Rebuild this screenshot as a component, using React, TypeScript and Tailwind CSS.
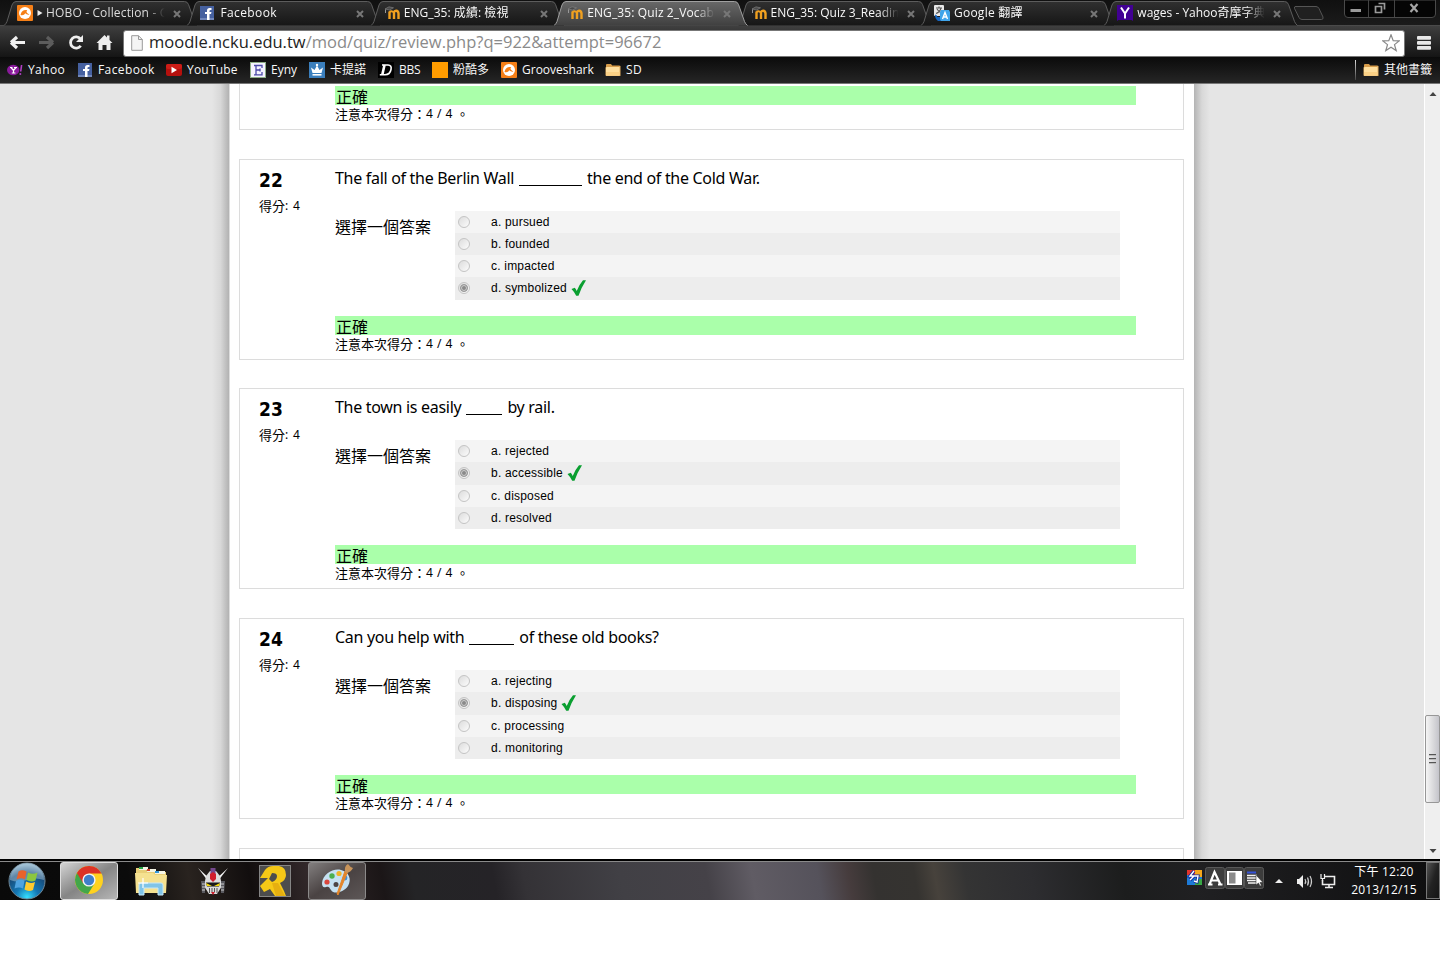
import type { ReactNode } from "react";

const UI = "font-['Open_Sans','Noto_Sans_CJK_TC',sans-serif]";
const PAGE = "font-['Noto_Sans','Noto_Sans_CJK_TC',sans-serif]";
const CJK = "font-['Noto_Sans_CJK_TC',sans-serif]";

/* ---------- icons ---------- */

function Grooveshark() {
  return (
    <svg width="16" height="16" viewBox="0 0 16 16">
      <rect width="16" height="16" rx="1" fill="#f57f17" />
      <circle cx="8" cy="8" r="6" fill="#fff" />
      <path d="M3.500 10C4.200 6 7 4.500 10.200 5.200C8.800 6.500 9.500 8.200 12.500 9.600C10.500 9.800 9.200 9.300 8.200 8.200C7.500 9.700 6 10.600 3.500 10Z" fill="#f57f17" />
    </svg>
  );
}

function FacebookIcon() {
  return (
    <svg width="14" height="14" viewBox="0 0 14 14">
      <rect width="14" height="14" fill="#4661a0" />
      <rect y="12" width="14" height="2" fill="#7187bb" />
      <path d="M7 14V8H5V6H7V4.500Q7 2 9.500 2H11.500V4H10.500Q9.500 4 9.500 5V6H11.500L11 8H9.500V14Z" fill="#fff" />
    </svg>
  );
}

function MoodleIcon() {
  return (
    <svg width="16" height="16" viewBox="0 0 16 16">
      <path d="M5.500 14V6.500M10 14V7M9.800 7.500Q10.500 5.600 12.300 5.800T14.500 8.200V14" fill="none" stroke="#f0a020" strokeWidth="2.400" />
      <path d="M5.500 7Q7.500 5.200 10 7.500" fill="none" stroke="#f0a020" strokeWidth="1.800" />
      <path d="M1 4L5 1.800L9.500 2.800L5.500 5Z" fill="#4a4a4a" stroke="#888" strokeWidth=".6" />
      <path d="M1.500 4.500V8" stroke="#999" strokeWidth="1" fill="none" />
    </svg>
  );
}

function TranslateIcon() {
  return (
    <svg width="16" height="16" viewBox="0 0 16 16">
      <rect x="0" y="0" width="10" height="11" rx="1" fill="#e9e9e9" />
      <path d="M2 3H8M5 1.500V3M7 3Q6 7 2 8.500M3 4Q5 7.500 8 8" stroke="#555" strokeWidth="1.100" fill="none" />
      <path d="M1 9.500Q3 9.500 3.500 12H7V16H4Q1 14 1 9.500Z" fill="#1565c0" />
      <path d="M7 5H15L16 7V16H7L6 14V7Z" fill="#3fa4ea" />
      <path d="M8.500 14L11 7.500L13.500 14M9.500 12H12.500" stroke="#fff" strokeWidth="1.400" fill="none" />
    </svg>
  );
}

function YahooDict() {
  return (
    <svg width="16" height="16" viewBox="0 0 16 16">
      <path d="M0 0H16V16L14.500 15H1.500L0 16Z" fill="#410093" />
      <path d="M4 2.500L8 8.500L12 2.500M8 8V13.500" stroke="#fff" strokeWidth="2" fill="none" />
    </svg>
  );
}

function YahooIcon() {
  return (
    <svg width="16" height="14" viewBox="0 0 16 14">
      <ellipse cx="6.200" cy="7" rx="6.200" ry="5.200" fill="#8a1a9c" />
      <path d="M3 4.500H5.500M7 4.500H10M4 4.500L6.500 7.500L9 4.500M6.500 7.500V9.800M4.800 10H8.400" stroke="#fff" strokeWidth="1.200" fill="none" />
      <path d="M14.600 2L13.700 8.500" stroke="#b03fc4" strokeWidth="1.600" />
      <circle cx="13.300" cy="11" r="1" fill="#b03fc4" />
    </svg>
  );
}

function YouTubeIcon() {
  return (
    <svg width="16" height="12" viewBox="0 0 16 12">
      <rect width="16" height="12" rx="2" fill="#b5100d" />
      <rect width="16" height="5" rx="2" fill="#cc1d17" />
      <path d="M5.500 2.800L11 6L5.500 9.200Z" fill="#fff" />
    </svg>
  );
}

function EynyIcon() {
  return (
    <svg width="16" height="16" viewBox="0 0 16 16">
      <rect width="16" height="16" fill="#8fae86" />
      <rect x="1" y="1" width="14" height="14" fill="#f5f3ff" />
      <path d="M4 3.500H12V6M4 12.800H12V10M6 3.500V13M6 8H10M10 6.500V9.500" stroke="#4a49a8" strokeWidth="1.300" fill="none" />
    </svg>
  );
}

function CrownIcon() {
  return (
    <svg width="16" height="16" viewBox="0 0 16 16">
      <rect width="16" height="16" fill="#3b7fbd" />
      <path d="M3.500 11L2 5.500L5.500 8L8 3.500L10.500 8L14 5.500L12.500 11Z" fill="#fff" />
      <rect x="3.500" y="12" width="9" height="1.600" fill="#fff" />
      <circle cx="8" cy="3" r="1.200" fill="#fff" />
    </svg>
  );
}

function DIcon() {
  return (
    <svg width="16" height="16" viewBox="0 0 16 16">
      <rect width="16" height="16" fill="#000" />
      <path d="M4 3H10Q14 3.200 13 7.500Q12 12.800 7 12.800H1.800" fill="none" stroke="#fff" strokeWidth="1.600" />
      <path d="M6.500 3L4.300 12.800" stroke="#fff" strokeWidth="2.600" />
    </svg>
  );
}

function Folder() {
  return (
    <svg width="16" height="14" viewBox="0 0 16 14">
      <path d="M1 2Q1 1 2 1H6L7.200 2.500H14V4H1Z" fill="#d79c4a" />
      <path d="M.5 4.300H13.800L14 2.500L15.500 3V12.500Q15.500 13 15 13H1.500Q.5 13 .5 12Z" fill="#e2ac5e" />
      <rect x="1" y="4" width="13.500" height="8.500" rx=".6" fill="#ffdf9e" />
      <path d="M1 9H14.500V12.500H1Z" fill="#fbd186" />
    </svg>
  );
}

function Check() {
  return (
    <svg width="16" height="16" viewBox="0 0 16 16" className="shrink-0">
      <path d="M.5 9L3.800 7.800Q5 9.300 5.700 11Q8.300 4.500 12 .3H15Q10.500 7.200 7.500 15.800H5.200Q3.300 11.800.5 9Z" fill="#0a9f30" />
    </svg>
  );
}

/* ---------- browser chrome ---------- */

interface TabData {
  icon: ReactNode;
  title: string;
  text: string;
  active?: boolean;
  playing?: boolean;
}

const tabs: TabData[] = [
  { icon: <Grooveshark />, title: "HOBO - Collection - G", text: "tracking-[0.15px]", playing: true },
  { icon: <FacebookIcon />, title: "Facebook", text: "tracking-[0.4px]" },
  { icon: <MoodleIcon />, title: "ENG_35: 成績: 檢視", text: "tracking-[0.05px]" },
  { icon: <MoodleIcon />, title: "ENG_35: Quiz 2_Vocab", text: "tracking-[0.12px]", active: true },
  { icon: <MoodleIcon />, title: "ENG_35: Quiz 3_Readin", text: "" },
  { icon: <TranslateIcon />, title: "Google 翻譯", text: "tracking-[0.25px]" },
  { icon: <YahooDict />, title: "wages - Yahoo奇摩字典", text: "" },
];

function Tab({ tab }: { tab: TabData }) {
  return (
    <div className={tab.active ? "relative z-10 h-[26px] w-[183.4px]" : "relative h-[26px] w-[183.4px]"}>
      <svg className="absolute left-0 top-0" width="194" height="26" viewBox="0 0 194 26">
        <defs>
          <linearGradient id="tabIdle" x1="0" y1="0" x2="0" y2="1">
            <stop offset="0" stopColor="#303030" />
            <stop offset="1" stopColor="#161616" />
          </linearGradient>
          <linearGradient id="tabActive" x1="0" y1="0" x2="0" y2="1">
            <stop offset="0" stopColor="#686868" />
            <stop offset="1" stopColor="#404040" />
          </linearGradient>
        </defs>
        <path
          d="M0 25.500Q2 24 3 21.500L8 5Q9.200 1.500 12 1.500H180.500Q183.500 1.500 184.500 4.500L190.500 21.500Q191.500 24 193.500 25.500"
          fill={tab.active ? "url(#tabActive)" : "url(#tabIdle)"}
          stroke={tab.active ? "#a0a0a0" : "#5c5c5c"}
        />
      </svg>
      <div className="relative flex h-full items-center pl-[13px]">
        <span className="flex w-4 shrink-0">{tab.icon}</span>
        {tab.playing && (
          <svg className="ml-1 shrink-0" width="6" height="8" viewBox="0 0 6 8">
            <path d="M.5 1L5.500 4L.5 7Z" fill="#eee" />
          </svg>
        )}
        <span
          className={`${tab.playing ? "ml-[3px] w-[120px] text-[#dcdcdc]" : "ml-1 w-[129px] text-[#f8f8f8]"} ${tab.text} overflow-hidden whitespace-nowrap text-xs leading-4 [mask-image:linear-gradient(to_right,black_84%,transparent_99%)]`}
        >
          {tab.title}
        </span>
        <svg className="ml-[7px] mt-px shrink-0" width="8" height="8" viewBox="0 0 8 8">
          <path d="M1 1L7 7M7 1L1 7" stroke="#777" strokeWidth="2" />
        </svg>
      </div>
    </div>
  );
}

function WindowButtons() {
  return (
    <svg width="93" height="18" viewBox="0 0 93 18" className="mr-[3px] shrink-0">
      <path d="M.5 0V14Q.5 17.500 4 17.500H88Q91.500 17.500 91.500 14V0Z" fill="#050505" stroke="#4a4a4a" />
      <path d="M24.500 0V17M50.500 0V17" stroke="#444" />
      <rect x="6.500" y="9" width="10.500" height="3" fill="#9a9a9a" />
      <path d="M34.500 3.500H40.500V9.500M31.500 6.500H37.500V12.500H31.500Z" stroke="#9a9a9a" strokeWidth="1.700" fill="none" />
      <path d="M66.500 4L73.500 12M73.500 4L66.500 12" stroke="#a5a5a5" strokeWidth="2.200" />
    </svg>
  );
}

function TabStrip() {
  return (
    <div className="flex h-[25px] bg-gradient-to-b from-[#101010] to-[#1b1b1b] pl-1">
      <div className="flex">
        {tabs.map((tab) => (
          <Tab key={tab.title} tab={tab} />
        ))}
      </div>
      <svg width="36" height="22" viewBox="0 0 36 22" className="ml-1 shrink-0">
        <path d="M3 6.500H24Q26 6.500 27 8.500L31 17Q31.500 19.500 29.500 19.500H10Q8 19.500 7 17.500L2.500 8.500Q2 6.500 3.500 6.500Z" fill="#202020" stroke="#555" />
      </svg>
      <div className="flex-1" />
      <WindowButtons />
    </div>
  );
}

function Toolbar() {
  return (
    <div className="flex h-8 items-center border-t border-[#4a4a4a] bg-gradient-to-b from-[#3f3f3f] to-[#151515]">
      <svg width="114" height="24" viewBox="0 0 114 24" className="ml-1 mt-[3px] shrink-0">
        <path d="M7 11.500L13 6M7 11.500L13 17M8 11.500H21" stroke="#f0f0f0" strokeWidth="3.200" fill="none" />
        <path d="M49 11.500L43 6M49 11.500L43 17M48 11.500H35" stroke="#5c5c5c" strokeWidth="3.200" fill="none" />
        <path d="M76.500 8A5.600 5.600 0 1 0 76.700 14.800" stroke="#eee" strokeWidth="2.800" fill="none" />
        <path d="M79 4V11H72Z" fill="#eee" />
        <path d="M92.500 12L100.500 4L103 6.500V4.500H105.500V9L108.500 12H106.500V19H102.500V14H98.500V19H94.500V12Z" fill="#eee" />
      </svg>
      <div className="ml-[5px] mt-[3px] flex h-[27px] w-[1282px] shrink-0 items-center rounded-[3px] border border-[#777] bg-white pl-[7px] pr-1">
        <svg width="12" height="16" viewBox="0 0 12 16" className="shrink-0">
          <path d="M.7.7H7.500L11.300 4.500V15.300H.7Z" fill="#f4f4f4" stroke="#999" />
          <path d="M7.500.7V4.500H11.300" fill="none" stroke="#999" />
        </svg>
        <span className="ml-1.5 flex-1 whitespace-nowrap pb-0.5 text-[16.5px] leading-6 text-[#8a8a8a]">
          <span className="text-[#222]">moodle.ncku.edu.tw</span>/mod/quiz/review.php?q=922&amp;attempt=96672
        </span>
        <svg width="18" height="18" viewBox="0 0 18 18">
          <path d="M9 .8L11.200 6.600L17.200 6.900L12.500 10.600L14.200 16.600L9 13.200L3.800 16.600L5.500 10.600L.8 6.900L6.800 6.600Z" fill="#fff" stroke="#888" strokeWidth="1.200" />
        </svg>
      </div>
      <svg width="14" height="16" viewBox="0 0 14 16" className="ml-3 mt-0.5 shrink-0">
        <rect y="1" width="14" height="3.800" rx="1" fill="#e8e8e8" />
        <rect y="6" width="14" height="3.800" rx="1" fill="#e8e8e8" />
        <rect y="11" width="14" height="3.800" rx="1" fill="#e8e8e8" />
      </svg>
    </div>
  );
}

function Bookmark({ icon, label, box }: { icon: ReactNode; label: string; box: string }) {
  return (
    <div className={`${box} flex shrink-0 items-center gap-[5px] whitespace-nowrap`}>
      <span className="flex w-4 justify-center">{icon}</span>
      <span>{label}</span>
    </div>
  );
}

function Bookmarks() {
  return (
    <div className="flex h-[27px] items-center border-b border-[#777] bg-gradient-to-b from-[#0b0b0b] to-[#262626] pl-[7px] text-xs text-[#f8f8f8]">
      <Bookmark box="w-[70px] tracking-[0.4px]" icon={<YahooIcon />} label="Yahoo" />
      <Bookmark box="w-[89px] tracking-[0.4px]" icon={<FacebookIcon />} label="Facebook" />
      <Bookmark box="w-[84px] tracking-[0.2px]" icon={<YouTubeIcon />} label="YouTube" />
      <Bookmark box="w-[59px]" icon={<EynyIcon />} label="Eyny" />
      <Bookmark box="w-[69px]" icon={<CrownIcon />} label="卡提諾" />
      <Bookmark box="w-[54px] tracking-[-0.2px]" icon={<DIcon />} label="BBS" />
      <Bookmark box="w-[69px]" icon={<span className="size-4 bg-[#ff9c00]" />} label="粉酷多" />
      <Bookmark box="w-[104px]" icon={<Grooveshark />} label="Grooveshark" />
      <Bookmark box="w-[60px] tracking-[0.3px]" icon={<Folder />} label="SD" />
      <div className="flex-1" />
      <div className="mr-[7px] h-5 w-px bg-gradient-to-b from-[#ddd] to-[#444]" />
      <Bookmark box="w-[77px]" icon={<Folder />} label="其他書籤" />
    </div>
  );
}

/* ---------- quiz page ---------- */

interface Question {
  no: number;
  before: string;
  blank: string;
  after: string;
  answers: string[];
  correct: number;
  tall: number;
  gap: string;
}

const questions: Question[] = [
  { no: 22, before: "The fall of the Berlin Wall", blank: "w-[63px]", after: "the end of the Cold War.", answers: ["pursued", "founded", "impacted", "symbolized"], correct: 3, tall: 3, gap: "mb-7" },
  { no: 23, before: "The town is easily", blank: "w-[36px]", after: "by rail.", answers: ["rejected", "accessible", "disposed", "resolved"], correct: 1, tall: 1, gap: "mb-[29px]" },
  { no: 24, before: "Can you help with", blank: "w-[45px]", after: "of these old books?", answers: ["rejecting", "disposing", "processing", "monitoring"], correct: 1, tall: 1, gap: "mb-[29px]" },
];

function Feedback() {
  return (
    <div className="ml-[95px] w-[801px]">
      <div className={`${CJK} h-[19px] bg-[#aaffaa] pl-px pt-px text-base leading-[18px]`}>正確</div>
      <div className={`${PAGE} flex h-[18px] items-center text-xs leading-4 text-black`}>
        <span className={`${CJK} text-[13px]`}>注意本次得分：</span>
        <span className="tracking-[0.5px]">4 / 4</span>
        <span className={`${CJK} ml-[3px] text-[13px]`}>。</span>
      </div>
    </div>
  );
}

function Radio({ on }: { on: boolean }) {
  return (
    <span className="flex size-3 items-center justify-center rounded-full border border-[#c4c4c4] bg-gradient-to-br from-[#dcdcdc] to-[#fcfcfc]">
      {on && <span className="size-2 rounded-full border border-[#999] bg-[#8a8a8a] shadow-[inset_0_0_0_1px_#cfcfcf]" />}
    </span>
  );
}

function QuestionCard({ q }: { q: Question }) {
  return (
    <section className={`${q.gap} flex h-[201px] shrink-0 flex-col border border-[#dcdcdc]`}>
      <div className="flex h-[156px] shrink-0">
        <div className="w-[95px] shrink-0 pl-[19px] pt-2">
          <div className="font-['DejaVu_Sans_Condensed','DejaVu_Sans',sans-serif] text-[19px] font-bold leading-6 [font-stretch:condensed]">{q.no}</div>
          <div className={`${PAGE} mt-[5px] flex items-center text-xs leading-[18px]`}>
            <span className={`${CJK} text-[13px]`}>得分</span>
            <span className="tracking-[0.8px]">:&nbsp;4</span>
          </div>
        </div>
        <div className="flex-1">
          <div className={`${PAGE} flex h-[51px] whitespace-nowrap pt-[7px] text-base leading-[22px] tracking-[-0.3px]`}>
            <span>{q.before}</span>
            <span className={`${q.blank} mx-[5px] h-[19px] border-b border-black`} />
            <span>{q.after}</span>
          </div>
          <div className="flex">
            <div className={`${CJK} w-[120px] pt-[3px] text-base leading-6`}>選擇一個答案</div>
            <ul className="w-[665px]">
              {q.answers.map((answer, i) => (
                <li
                  key={answer}
                  className={`${i === q.tall ? "h-[23px]" : "h-[22px]"} flex items-start pl-[3px] pt-[3px] font-['Liberation_Sans',Arial,sans-serif] text-xs leading-4 tracking-[0.2px] odd:bg-[#f4f4f4] even:bg-[#ededed]`}
                >
                  <span className="flex h-[15px] items-center">
                    <Radio on={i === q.correct} />
                  </span>
                  <span className="ml-[21px] mr-1">
                    {"abcd"[i]}. {answer}
                  </span>
                  {i === q.correct && <Check />}
                </li>
              ))}
            </ul>
          </div>
        </div>
      </div>
      <Feedback />
    </section>
  );
}

function Scrollbar() {
  return (
    <div className="flex w-4 shrink-0 flex-col items-center border-l border-white bg-[#efefef]">
      <svg width="8" height="4" viewBox="0 0 8 4" className="mt-2 shrink-0">
        <path d="M4 0L7.500 4H.5Z" fill="#444" />
      </svg>
      <div className="mt-[619px] flex h-[88px] w-[15px] shrink-0 flex-col items-center justify-center gap-[2px] rounded-[2px] border border-[#979797] bg-gradient-to-r from-[#f5f5f5] via-[#dcdcde] to-[#c4c4ca]">
        <span className="h-[2px] w-[7px] border-t border-[#555] bg-[#bbb]" />
        <span className="h-[2px] w-[7px] border-t border-[#555] bg-[#bbb]" />
        <span className="h-[2px] w-[7px] border-t border-[#555] bg-[#bbb]" />
      </div>
      <svg width="8" height="4" viewBox="0 0 8 4" className="mt-[46px] shrink-0">
        <path d="M4 4L7.500 0H.5Z" fill="#444" />
      </svg>
    </div>
  );
}

function Page() {
  return (
    <div className="flex h-[775px] overflow-hidden bg-[#e5e5e5] text-black">
      <div className="flex flex-1 justify-end">
        <div className="w-[17px] bg-gradient-to-r from-[#e5e5e5] via-[#d8d8d8] to-[#b2b2b2]" />
      </div>
      <main className="flex w-[965px] shrink-0 flex-col overflow-hidden border-l border-[#ddd] bg-white pl-[9px] pr-2.5">
        <section className="mb-[29px] flex h-[46px] w-[945px] shrink-0 flex-col border border-t-0 border-[#dcdcdc] pt-0.5">
          <Feedback />
        </section>
        {questions.map((q) => (
          <QuestionCard key={q.no} q={q} />
        ))}
        <section className="h-5 shrink-0 border border-[#dcdcdc]" />
      </main>
      <div className="w-4 bg-gradient-to-r from-[#b4b4b4] via-[#d8d8d8] to-[#e5e5e5]" />
      <div className="w-[214px]" />
      <Scrollbar />
    </div>
  );
}

/* ---------- taskbar ---------- */

function StartOrb() {
  return (
    <svg width="38" height="38" viewBox="0 0 38 38">
      <defs>
        <radialGradient id="orb" cx=".5" cy=".95" r=".9">
          <stop offset="0" stopColor="#36e0ff" />
          <stop offset=".35" stopColor="#1477b4" />
          <stop offset=".75" stopColor="#174a78" />
          <stop offset="1" stopColor="#8fb4cc" />
        </radialGradient>
      </defs>
      <circle cx="19" cy="19" r="18" fill="url(#orb)" stroke="#6f8796" />
      <path d="M2 18A17 17 0 0 1 36 18Q28 15 19 18T2 18Z" fill="#b9d0df" opacity=".45" />
      <path d="M10.500 9.500Q14 7 18.500 9.500L17 17.500Q13 15 8.500 17.500Z" fill="#e9622b" />
      <path d="M20 10.500Q24.500 13 29.500 10.500L27.500 18.500Q23 20.500 18.500 18Z" fill="#8cc63e" />
      <path d="M8 19Q12.500 16.500 16.500 19L15 26.500Q11 24.500 6.500 26.500Z" fill="#4fa3e0" />
      <path d="M18 19.500Q22.500 22 27 20L25 28Q20.500 30 16.500 27.500Z" fill="#ffcb2d" />
    </svg>
  );
}

function ChromeIcon() {
  return (
    <svg width="30" height="30" viewBox="0 0 30 30">
      <circle cx="15" cy="15" r="14" fill="#ffd21f" />
      <path d="M15 15L2.900 8A14 14 0 0 0 14 29L20.500 18.500Z" fill="#43a64a" />
      <path d="M2.900 8A14 14 0 0 1 27.500 8.500H15L9 18Z" fill="#dc3226" />
      <circle cx="15" cy="15" r="6.600" fill="#f4f4f4" />
      <circle cx="15" cy="15" r="5.200" fill="#3f7fc9" />
    </svg>
  );
}

function ExplorerIcon() {
  return (
    <svg width="34" height="30" viewBox="0 0 34 30">
      <path d="M2 5V2H12L13 5H22L23 6H32V27H2Z" fill="#e9cf78" />
      <rect x="5" y="1" width="9" height="3" fill="#f5f5e5" />
      <rect x="5" y="1" width="4" height="2" fill="#29a745" />
      <rect x="13" y="3" width="9" height="3" fill="#f5f5e5" />
      <rect x="13" y="3" width="3" height="2" fill="#d2452d" />
      <rect x="21" y="5" width="10" height="3" fill="#f5f5e5" />
      <rect x="21" y="5" width="4" height="2" fill="#3497d8" />
      <path d="M1 7H19L21 9H33L32 27H2Z" fill="#f5e190" />
      <path d="M5 29V19Q5 17 7 17H27Q29 17 29 19V29H24V22H10V29Z" fill="#80c4e8" stroke="#c7e8f8" />
      <path d="M9 12V22M4 17H14" stroke="#fff" strokeWidth="1.200" />
    </svg>
  );
}

function RobotIcon() {
  return (
    <svg width="32" height="30" viewBox="0 0 32 30">
      <path d="M1 2L13 13L11 15ZM31 2L19 13L21 15Z" fill="#f2f2f2" />
      <path d="M9 10L13 5H19L23 10L25 20L20 28H12L7 20Z" fill="#dcdcdc" />
      <path d="M4 15H8V27H5ZM28 15H24V27H27Z" fill="#5a5a60" />
      <path d="M5 18H8M5 21H8M5 24H8M24 18H27M24 21H27M24 24H27" stroke="#ccc" />
      <path d="M13.500 2H18.500V9H13.500Z" fill="#74478c" />
      <path d="M13 8L16 6L19 8V13L16 16L13 13Z" fill="#d11d2c" />
      <path d="M9 16.500H23L22 20.500H10Z" fill="#191919" />
      <path d="M9 17L15 20H10ZM23 17L17 20H22Z" fill="#f5d90a" />
      <path d="M12.500 22V27M15 22V26M17.500 22V26M20 22V27" stroke="#555" />
      <path d="M14 26H18L16 29Z" fill="#c91d2c" />
    </svg>
  );
}

function PIcon() {
  return (
    <svg width="32" height="32" viewBox="0 0 32 32">
      <rect x=".5" y=".5" width="31" height="31" fill="#4d4d4d" stroke="#858585" />
      <path fillRule="evenodd" d="M1 13L6 5Q9 1 14 1H20Q27 2 27 10Q27 15 21 18L25 26L27 31H16L11 24L5 27L1 21L9 13ZM13 8L10 14L13 17Q18 15 18 11Q18 8 13 8Z" fill="#f5c817" />
      <path d="M13 18L19 18L26 31H17Z" fill="#e6af10" />
    </svg>
  );
}

function PaintIcon() {
  return (
    <svg width="32" height="32" viewBox="0 0 32 32">
      <path fillRule="evenodd" d="M1 19C2 10 12 4 20 6C28 8 31 15 27 22C23 28 13 31 10 26C8 23 8 22 5 23C2 24 1 22 1 19ZM15 18A2.500 2.500 0 1 0 15 23A2.500 2.500 0 1 0 15 18Z" fill="#c5e1f2" />
      <circle cx="6" cy="18" r="2.600" fill="#d9473e" />
      <circle cx="11" cy="12" r="2.700" fill="#4caf50" />
      <circle cx="18" cy="9.500" r="2.600" fill="#f0b429" />
      <circle cx="24" cy="14" r="2.400" fill="#3f8fd8" />
      <path d="M27 7L17 31L16 30L24 7Z" fill="#e4862a" stroke="#e4862a" />
      <path d="M24 8Q23 2 27 0Q29 3 32 4Q30 8 26 9Z" fill="#c8945a" />
    </svg>
  );
}

function TrayIcons() {
  return (
    <svg width="152" height="24" viewBox="0 0 152 24" className="shrink-0">
      <rect x="0" y="3" width="15" height="15" fill="#1d7bd8" />
      <rect x="0" y="3" width="8" height="5" fill="#e3342b" />
      <rect x="8" y="3" width="7" height="7" fill="#f6a81c" />
      <rect x="8" y="12" width="7" height="6" fill="#39a845" />
      <path d="M7 4L3 9H11L10 15L7 14M7 9L3 13" stroke="#112a9e" strokeWidth="3.200" fill="none" />
      <path d="M7 4L3 9H11L10 15L7 14M7 9L3 13" stroke="#fff" strokeWidth="1.400" fill="none" />
      <g fill="#3c3c3c" stroke="#585858">
        <rect x="18.500" y=".5" width="19" height="21" rx="2" />
        <rect x="38.500" y=".5" width="18" height="21" rx="2" />
        <rect x="57.500" y=".5" width="19" height="21" rx="2" />
      </g>
      <path d="M22.500 17.500L27.500 5L33.500 17.500M24 13.500H31.500M21 17.500H25.500M31 17.500H35.500" stroke="#fff" strokeWidth="2.200" fill="none" />
      <rect x="40" y="4" width="15" height="14" fill="#fff" />
      <rect x="42" y="5.500" width="6.500" height="11" fill="#8b8b8b" />
      <path d="M60 5.500H69" stroke="#3552d8" strokeWidth="2" />
      <path d="M60 8.500H70M60 11H70M60 13.500H69M61 16H69" stroke="#f3f3f3" strokeWidth="1.500" />
      <path d="M69 8V18L71.500 16L73 19L74.500 18.500L73 15.500H76Z" fill="#fff" stroke="#222" strokeWidth=".5" />
      <path d="M88 16L92 12L96 16Z" fill="#eee" />
      <path d="M110 12H112L116 8V21L112 17H110Z" fill="#eee" />
      <path d="M118 12Q119.500 14.500 118 17M120.500 10.500Q122.500 14.500 120.500 18.500M123 9Q126 14.500 123 20" stroke="#ccc" strokeWidth="1.200" fill="none" />
      <path d="M138 9.500H147.500V17.500H135.500V13M142 18V20M138 20.500H146" stroke="#eee" strokeWidth="1.600" fill="none" />
      <path d="M134 8V11.500H137.500V8M134 7V9M137.500 7V9M135.500 12V14" stroke="#eee" strokeWidth="1.200" fill="none" />
    </svg>
  );
}

function Taskbar() {
  return (
    <div className="flex h-[41px] border-t-2 border-black bg-[linear-gradient(80deg,#090909_0,#0b0b0b_130px,#29231f_190px,#120e0e_250px,#33292b_310px,#1b1617_380px,#242426_410px,#252327_490px,#343236_520px,#414045_615px,#454248_700px,#605c64_745px,#55525b_810px,#463c3d_840px,#343230_865px,#353330_905px,#47423c_925px,#343434_955px,#2d2d30_1020px,#1c1d1d_1110px,#202022_1180px,#0d0d0e_1440px)]">
      <div className="flex flex-1 border-t border-[#8a8a8a]">
        <div className="flex w-[60px] shrink-0 items-center justify-center pr-[7px]">
          <StartOrb />
        </div>
        <div className="flex h-[38px] w-[58px] shrink-0 items-center justify-center rounded-[3px] border border-[#ddd] bg-gradient-to-br from-[#d4d4d4] via-[#858585] to-[#b7b7b7] pb-0.5">
          <ChromeIcon />
        </div>
        <div className="flex w-[66px] shrink-0 items-center justify-center"><ExplorerIcon /></div>
        <div className="flex w-[58px] shrink-0 items-center justify-center"><RobotIcon /></div>
        <div className="flex w-[66px] shrink-0 items-center justify-center pb-px"><PIcon /></div>
        <div className="flex h-[38px] w-[58px] shrink-0 items-center justify-center rounded-[3px] border border-[#8c8a8a] bg-gradient-to-br from-[#827f7f] via-[#4a4343] to-[#5d5757] pb-0.5">
          <PaintIcon />
        </div>
        <div className="flex-1" />
        <div className="flex items-start pt-[5px]"><TrayIcons /></div>
        <div className="flex w-[87px] shrink-0 flex-col items-center pl-[3px] pt-px text-xs leading-[18px] tracking-[0.2px] text-white">
          <span className="whitespace-nowrap">下午 12:20</span>
          <span className="whitespace-nowrap">2013/12/15</span>
        </div>
        <div className="h-[37px] w-[14px] shrink-0 border border-[#777] bg-gradient-to-br from-[#555] via-[#222] to-[#151515]" />
      </div>
    </div>
  );
}

export default function App() {
  return (
    <div className={`${UI} h-[964px] w-[1440px] overflow-hidden bg-white`}>
      <TabStrip />
      <Toolbar />
      <Bookmarks />
      <Page />
      <Taskbar />
    </div>
  );
}
